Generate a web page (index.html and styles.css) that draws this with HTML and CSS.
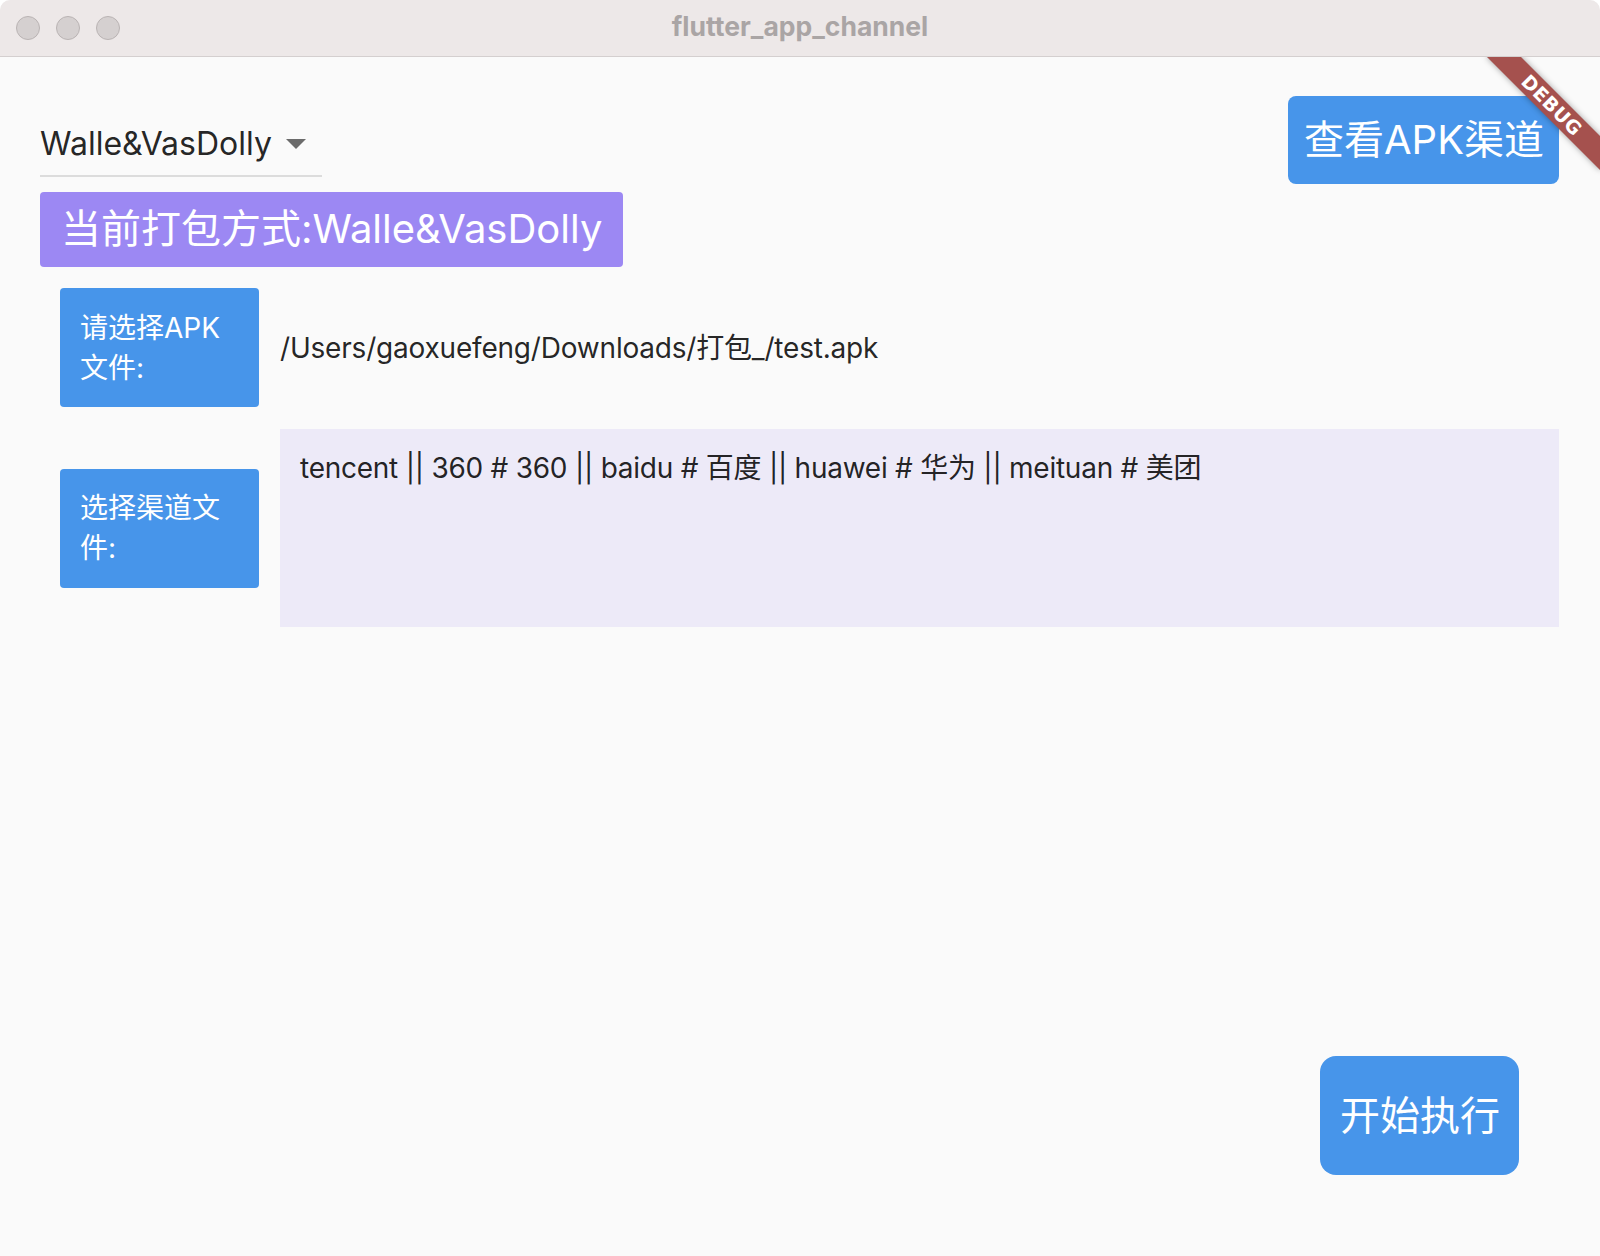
FILE: index.html
```html
<!DOCTYPE html>
<html lang="zh-CN">
<head>
<meta charset="utf-8">
<title>flutter_app_channel</title>
<link rel="stylesheet" href="styles.css">
</head>
<body>
<div class="window">
  <div class="titlebar">
    <div class="lights">
      <span class="light"></span>
      <span class="light"></span>
      <span class="light"></span>
    </div>
    <div class="title">flutter_app_channel</div>
    <div class="spacer"></div>
  </div>
  <div class="content">
    <div class="debug-banner">DEBUG</div>
    <div class="top-row">
      <div class="dropdown">
        <span class="dd-text">Walle&amp;VasDolly</span>
        <span class="dd-icon"><svg width="20" height="10" viewBox="0 0 20 10"><path d="M0 0 L20 0 L10 10 Z" fill="#6b6b6b"/></svg></span>
      </div>
      <button class="btn btn-view">查看APK渠道</button>
    </div>
    <div class="mode-tag">当前打包方式:Walle&amp;VasDolly</div>
    <div class="file-row">
      <button class="btn btn-small">请选择APK文件:</button>
      <div class="path">/Users/gaoxuefeng/Downloads/打包_/test.apk</div>
    </div>
    <div class="file-row channel-row">
      <button class="btn btn-small">选择渠道文件:</button>
      <div class="channel-box">tencent || 360 # 360 || baidu # 百度 || huawei # 华为 || meituan # 美团</div>
    </div>
    <div class="fab-row">
      <button class="btn btn-fab">开始执行</button>
    </div>
  </div>
</div>
</body>
</html>
```
FILE: styles.css
```css
* { box-sizing: border-box; }
html, body { margin: 0; padding: 0; background: #ffffff; }
body {
  font-family: Inter, "Noto Sans CJK SC", sans-serif;
}
.window {
  width: 1600px;
  height: 1256px;
  background: #fafafa;
  border-radius: 10px 10px 0 0;
  overflow: hidden;
  display: flex;
  flex-direction: column;
}
.titlebar {
  height: 57px;
  flex: none;
  background: #ede8e8;
  border-bottom: 1px solid #d4cfcf;
  display: grid;
  grid-template-columns: 1fr auto 1fr;
  align-items: center;
}
.lights {
  display: flex;
  gap: 16px;
  padding-left: 16px;
}
.light {
  width: 24px;
  height: 24px;
  border-radius: 50%;
  background: #d5d0d0;
  border: 1px solid #bab4b4;
}
.title {
  font-family: Inter, "Liberation Sans", sans-serif;
  font-weight: 700;
  font-size: 26.5px;
  line-height: 32px;
  padding-bottom: 4px;
  color: #aaa5a5;
}
.content {
  position: relative;
  flex: 1;
  overflow: hidden;
  display: flex;
  flex-direction: column;
  padding: 39px 41px 0 40px;
  color: rgba(0, 0, 0, 0.87);
}
.debug-banner {
  position: absolute;
  top: 36px;
  right: -32px;
  width: 160px;
  height: 24px;
  transform: rotate(45deg);
  background: #a5514e;
  box-shadow: 0 0 6px rgba(0, 0, 0, 0.35);
  color: #ffffff;
  font-family: "DejaVu Sans", "Liberation Sans", sans-serif;
  font-weight: 900;
  font-size: 19px;
  line-height: 24px;
  text-align: center;
  letter-spacing: 0.5px;
}
.top-row {
  display: flex;
  justify-content: space-between;
  align-items: flex-start;
}
.dropdown {
  width: 282px;
  display: flex;
  align-items: center;
  padding-top: 24px;
  padding-bottom: 7px;
  border-bottom: 2px solid #dcdcdc;
}
.dd-text {
  font-size: 32px;
  line-height: 48px;
  white-space: nowrap;
}
.dd-icon {
  width: 48px;
  height: 48px;
  display: flex;
  align-items: center;
  justify-content: center;
}
.btn {
  border: none;
  margin: 0;
  background: #4795ea;
  color: #ffffff;
  font-family: Inter, "Noto Sans CJK SC", sans-serif;
  cursor: pointer;
}
.btn-view {
  width: 271px;
  height: 88px;
  padding: 0 16px;
  border-radius: 8px;
  font-size: 40px;
  line-height: 56px;
  white-space: nowrap;
}
.mode-tag {
  align-self: flex-start;
  margin-top: 8px;
  height: 75px;
  padding: 9px 21px 0 21px;
  background: #9c88f3;
  color: #ffffff;
  border-radius: 4px;
  font-size: 40px;
  line-height: 56px;
  white-space: nowrap;
}
.file-row {
  display: flex;
  align-items: center;
  gap: 21px;
  margin-top: 21px;
  margin-left: 20px;
}
.channel-row {
  margin-top: 22px;
}
.btn-small {
  flex: none;
  width: 199px;
  height: 119px;
  padding: 0 20px;
  border-radius: 4px;
  font-size: 28px;
  line-height: 40px;
  text-align: left;
}
.path {
  font-size: 28px;
  line-height: 40px;
  letter-spacing: -0.2px;
  white-space: nowrap;
}
.channel-box {
  flex: 1;
  height: 198px;
  padding: 19px 20px;
  background: #edeaf8;
  font-size: 28px;
  line-height: 40px;
  letter-spacing: -0.25px;
}
.fab-row {
  margin-top: auto;
  margin-bottom: 81px;
  padding-right: 40px;
  display: flex;
  justify-content: flex-end;
}
.btn-fab {
  width: 199px;
  height: 119px;
  border-radius: 16px;
  font-size: 40px;
  line-height: 56px;
  padding: 0 20px;
  white-space: nowrap;
}
```
